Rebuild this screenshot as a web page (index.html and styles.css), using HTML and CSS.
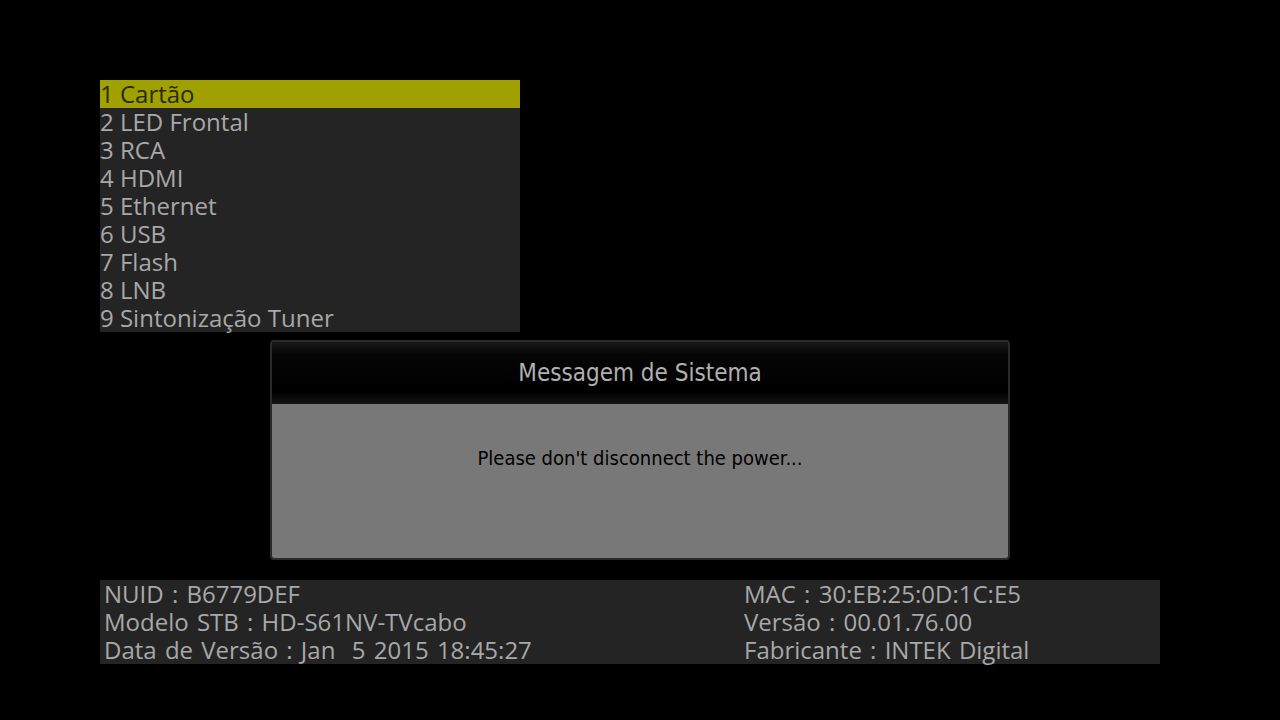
FILE: index.html
```html
<!DOCTYPE html>
<html>
<head>
<meta charset="utf-8">
<link rel="stylesheet" href="styles.css">
</head>
<body>
<div class="screen">
  <ul class="menu">
    <li class="item selected">1 Cartão</li>
    <li class="item">2 LED Frontal</li>
    <li class="item">3 RCA</li>
    <li class="item">4 HDMI</li>
    <li class="item">5 Ethernet</li>
    <li class="item">6 USB</li>
    <li class="item">7 Flash</li>
    <li class="item">8 LNB</li>
    <li class="item">9 Sintonização Tuner</li>
  </ul>
  <div class="dialog">
    <div class="dialog-head">Messagem de Sistema</div>
    <div class="dialog-body">Please don't disconnect the power...</div>
  </div>
  <div class="info">
    <div class="col">
      <div class="line">NUID : B6779DEF</div>
      <div class="line">Modelo STB : HD-S61NV-TVcabo</div>
      <div class="line">Data de Versão : Jan&nbsp; 5 2015 18:45:27</div>
    </div>
    <div class="col right">
      <div class="line">MAC : 30:EB:25:0D:1C:E5</div>
      <div class="line">Versão : 00.01.76.00</div>
      <div class="line">Fabricante : INTEK Digital</div>
    </div>
  </div>
</div>
</body>
</html>
```
FILE: styles.css
```css
html, body {
  margin: 0;
  padding: 0;
  background: #000;
}
.screen {
  width: 1280px;
  height: 720px;
  background: #000;
  padding: 80px 0 0 100px;
  box-sizing: border-box;
  font-family: "Open Sans", "DejaVu Sans", sans-serif;
  color: #a8a8a8;
}
.menu {
  list-style: none;
  margin: 0;
  padding: 0;
  width: 420px;
  background: #242424;
}
.item {
  height: 28px;
  line-height: 28px;
  font-size: 24px;
  white-space: nowrap;
}
.item.selected {
  background: #a0a000;
  color: #2a2a08;
}
.dialog {
  margin: 8px 0 0 170px;
  width: 740px;
  height: 220px;
  box-sizing: border-box;
  border: 2px solid #2a2a2a;
  border-radius: 4px;
  overflow: hidden;
  display: flex;
  flex-direction: column;
}
.dialog-head {
  height: 62px;
  flex: none;
  background: linear-gradient(#1a1a1a 0%, #050505 20%, #000 80%, #151515 100%);
  display: flex;
  align-items: center;
  justify-content: center;
  font-size: 24px;
  color: #b0b0b0;
  font-family: "DejaVu Sans Condensed", "DejaVu Sans", sans-serif;
}
.dialog-body {
  flex: 1;
  background: #787878;
  display: flex;
  justify-content: center;
  padding-top: 42px;
  font-size: 20px;
  color: #000;
  font-family: "DejaVu Sans Condensed", "DejaVu Sans", sans-serif;
}
.info {
  margin-top: 20px;
  width: 1060px;
  height: 84px;
  background: #242424;
  display: flex;
  padding-left: 4px;
  box-sizing: border-box;
}
.col {
  width: 640px;
}
.col.right {
  width: auto;
}
.line {
  height: 28px;
  line-height: 28px;
  font-size: 24px;
  word-spacing: 2px;
  white-space: nowrap;
}
```
